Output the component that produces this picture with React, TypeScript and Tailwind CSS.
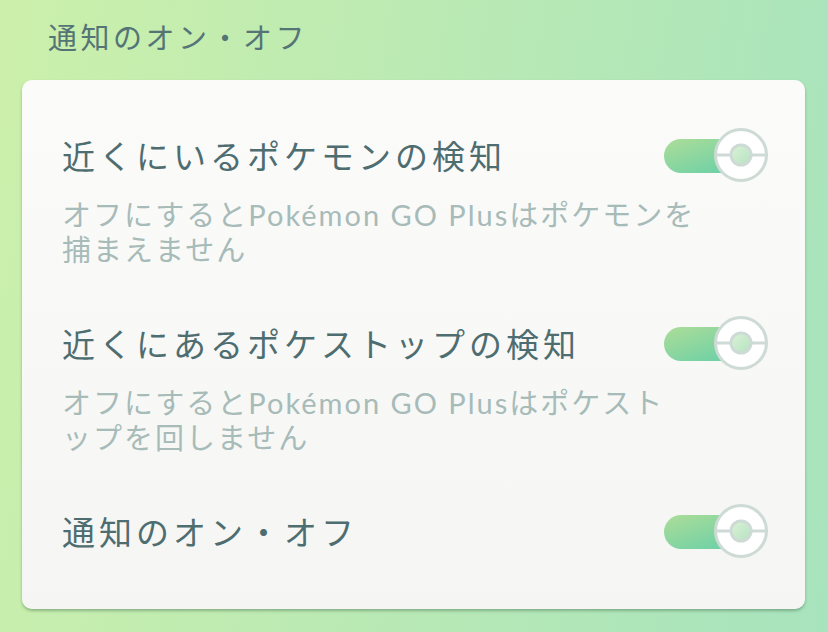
import React from 'react';

const FONT = "font-['Noto_Sans_CJK_JP','Noto_Sans',sans-serif]";

const ROWS = [
  { title: '近くにいるポケモンの検知', desc: ['オフにするとPokémon GO Plusはポケモンを', '捕まえません'] },
  { title: '近くにあるポケストップの検知', desc: ['オフにするとPokémon GO Plusはポケスト', 'ップを回しません'] },
  { title: '通知のオン・オフ', desc: [] as string[] },
];

const Toggle: React.FC = () => (
  <div className="relative w-[104px] h-[54px] shrink-0">
    <div className="absolute left-0 top-[11px] w-[78px] h-[34px] rounded-full bg-[linear-gradient(160deg,#addd98,#66cfa8)]" />
    <svg className="absolute right-0 top-0" width="54" height="54" viewBox="0 0 54 54">
      <defs>
        <linearGradient id="core" x1="0" y1="0" x2="1" y2="1">
          <stop offset="0" stopColor="#dcf2d6" />
          <stop offset="1" stopColor="#b4e3c2" />
        </linearGradient>
      </defs>
      <circle cx="27" cy="27" r="25.5" fill="#ffffff" stroke="#cddad5" strokeWidth="3" />
      <line x1="2" y1="27" x2="52" y2="27" stroke="#cddad5" strokeWidth="3" />
      <circle cx="27" cy="27" r="10" fill="url(#core)" stroke="#cddad5" strokeWidth="3" />
    </svg>
  </div>
);

export default function App() {
  return (
    <div className={`w-[828px] h-[632px] overflow-hidden bg-[linear-gradient(100deg,#ccf0ab,#a7e3bd)] ${FONT}`}>
      <div className="pt-4 pl-12 text-[29px] leading-[40px] tracking-[3.5px] text-[#557476]">通知のオン・オフ</div>
      <div className="mt-6 ml-[22px] w-[783px] rounded-[10px] bg-[linear-gradient(180deg,#fbfbfa,#f5f6f3)] shadow-[0_2px_3px_rgba(70,110,80,0.45)] pt-[53px] pb-[56px] pl-10 pr-[37px]">
        {ROWS.map((r, i) => (
          <div key={i} className={i > 0 ? 'mt-[54px]' : ''}>
            <div className="flex items-center justify-between h-[44px]">
              <div className="text-[33px] leading-[44px] tracking-[4px] text-[#4e6d70] whitespace-nowrap">{r.title}</div>
              <Toggle />
            </div>
            {r.desc.length > 0 && (
              <div className="mt-5 font-['Lato','Noto_Sans_CJK_JP',sans-serif] text-[29px] leading-[35px] tracking-[2px] text-[#a7bbb9]">
                {r.desc.map(l => (
                  <div key={l} className="whitespace-nowrap">{l}</div>
                ))}
              </div>
            )}
          </div>
        ))}
      </div>
    </div>
  );
}
